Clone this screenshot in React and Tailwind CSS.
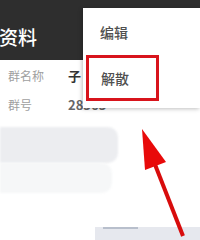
export default function App() {
  const font = { fontFamily: '"Noto Sans CJK SC", "Noto Sans", sans-serif' };
  return (
    <div className="relative w-[200px] h-[240px] overflow-hidden bg-white" style={font}>
      <div className="h-[60px] bg-[#2e2e2e] flex items-center">
        <span className="text-white text-[19px] leading-none font-medium ml-[-1px] mt-[12px]">资料</span>
      </div>
      <div className="flex flex-col">
        <div className="h-[30px] flex items-center pt-[1px]">
          <span className="w-[68px] pl-[8px] text-[12px] text-[#a0a0a0]">群名称</span>
          <span className="text-[13px] font-bold text-[#333]">子</span>
        </div>
        <div className="h-[30px] flex items-center">
          <span className="w-[68px] pl-[8px] text-[12px] text-[#a0a0a0]">群号</span>
          <span className="text-[13px] font-bold text-[#666]">28565</span>
        </div>
        <div className="h-[7px]" />
        <div className="flex h-[36px]">
          <div className="w-[118px] bg-[#ecedf0] rounded-r-[10px] blur-[1px]" />
        </div>
        <div className="flex h-[30px]">
          <div className="w-[112px] bg-[#f6f7f8] rounded-r-[10px] blur-[1px]" />
        </div>
        <div className="h-[34px]" />
        <div className="flex h-[14px]">
          <div className="w-[95px]" />
          <div className="flex-1 bg-[#e6e8ee] flex flex-col">
            <div className="ml-[8px] w-[35px] h-[2px] bg-[#b8bfcc]" />
          </div>
        </div>
      </div>

      <div className="absolute left-[83px] top-[8px] w-[117px] h-[100px] bg-white shadow-[-1px_1px_4px_rgba(0,0,0,0.25)]">
        <div className="h-[47px] flex items-center pl-[17px] pt-[2px]">
          <span className="text-[14px] text-[#505050] font-medium">编辑</span>
        </div>
        <div className="absolute left-[3px] top-[47px] w-[73px] h-[46px] border-[3px] border-[#d8141c] flex items-center pl-[12px]">
          <span className="text-[14px] text-[#505050] font-medium">解散</span>
        </div>
      </div>

      <svg className="absolute left-0 top-0" width="200" height="240" viewBox="0 0 200 240">
        <line x1="183" y1="236" x2="154" y2="162" stroke="#d80c0c" strokeWidth="4" />
        <polygon points="142,129 145,170 166,162" fill="#e80a0a" />
      </svg>
    </div>
  );
}
